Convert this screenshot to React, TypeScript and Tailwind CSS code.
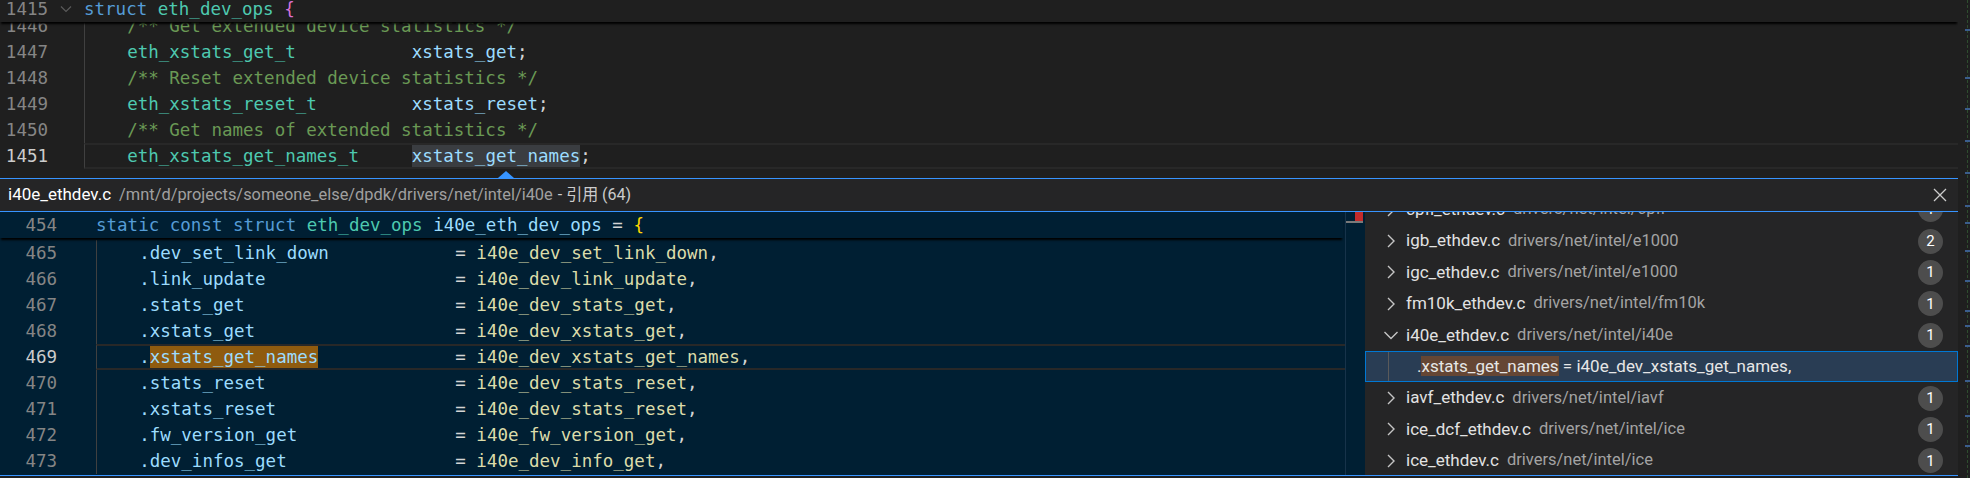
import React from 'react';

type Tok = [string, string];

const C = {
  kw: 'text-[#569cd6]',
  ty: 'text-[#4ec9b0]',
  id: 'text-[#9cdcfe]',
  fn: 'text-[#dcdcaa]',
  cm: 'text-[#6a9955]',
  pn: 'text-[#d4d4d4]',
};

const sp = (n: number) => ' '.repeat(Math.max(n, 1));

// struct member declaration, name aligned on column 31
const decl = (type: string, name: string, sel = false): Tok[] => [
  ['    ', ''],
  [type, C.ty],
  [sp(27 - type.length), ''],
  [name, sel ? `${C.id} inline-block bg-[#3a3d41]` : C.id],
  [';', C.pn],
];

// designated initializer, "=" aligned on column 34
const init = (field: string, fn: string, match = false): Tok[] => [
  ['    ', ''],
  ['.', C.id],
  [field, match ? `${C.id} inline-block bg-[#8f5b0f]` : C.id],
  [sp(29 - field.length), ''],
  ['= ', C.pn],
  [fn, C.fn],
  [',', C.pn],
];

const topLines: { n: number; toks: Tok[]; current?: boolean }[] = [
  { n: 1446, toks: [['    /** Get extended device statistics */', C.cm]] },
  { n: 1447, toks: decl('eth_xstats_get_t', 'xstats_get') },
  { n: 1448, toks: [['    /** Reset extended device statistics */', C.cm]] },
  { n: 1449, toks: decl('eth_xstats_reset_t', 'xstats_reset') },
  { n: 1450, toks: [['    /** Get names of extended statistics */', C.cm]] },
  { n: 1451, toks: decl('eth_xstats_get_names_t', 'xstats_get_names', true), current: true },
];

const peekLines: { n: number; toks: Tok[]; current?: boolean }[] = [
  { n: 465, toks: init('dev_set_link_down', 'i40e_dev_set_link_down') },
  { n: 466, toks: init('link_update', 'i40e_dev_link_update') },
  { n: 467, toks: init('stats_get', 'i40e_dev_stats_get') },
  { n: 468, toks: init('xstats_get', 'i40e_dev_xstats_get') },
  { n: 469, toks: init('xstats_get_names', 'i40e_dev_xstats_get_names', true), current: true },
  { n: 470, toks: init('stats_reset', 'i40e_dev_stats_reset') },
  { n: 471, toks: init('xstats_reset', 'i40e_dev_stats_reset') },
  { n: 472, toks: init('fw_version_get', 'i40e_fw_version_get') },
  { n: 473, toks: init('dev_infos_get', 'i40e_dev_info_get') },
];

const refs = [
  { file: 'cpfl_ethdev.c', dir: 'drivers/net/intel/cpfl', count: 1 },
  { file: 'igb_ethdev.c', dir: 'drivers/net/intel/e1000', count: 2 },
  { file: 'igc_ethdev.c', dir: 'drivers/net/intel/e1000', count: 1 },
  { file: 'fm10k_ethdev.c', dir: 'drivers/net/intel/fm10k', count: 1 },
  { file: 'i40e_ethdev.c', dir: 'drivers/net/intel/i40e', count: 1, open: true },
  { file: 'iavf_ethdev.c', dir: 'drivers/net/intel/iavf', count: 1 },
  { file: 'ice_dcf_ethdev.c', dir: 'drivers/net/intel/ice', count: 1 },
  { file: 'ice_ethdev.c', dir: 'drivers/net/intel/ice', count: 1 },
];

const Tokens = ({ toks }: { toks: Tok[] }) => (
  <>
    {toks.map(([t, c], i) => (
      <span key={i} className={c}>
        {t}
      </span>
    ))}
  </>
);

const CodeLine = ({
  n,
  toks,
  current,
  gutter,
  gap,
}: {
  n: number;
  toks: Tok[];
  current?: boolean;
  gutter: string;
  gap: string;
}) => (
  <div className="flex h-[26px]">
    <div className={`${gutter} text-right leading-[26px] ${current ? 'text-[#cccccc]' : 'text-[#858585]'}`}>{n}</div>
    <div className={gap} />
    <div
      className={`flex-1 whitespace-pre border-l border-[#404040] ${
        current ? 'border-y-2 border-y-[#282828] leading-[22px]' : 'leading-[26px]'
      }`}
    >
      <Tokens toks={toks} />
    </div>
  </div>
);

const Chevron = ({ open }: { open?: boolean }) => (
  <svg width="24" height="24" viewBox="0 0 24 24" fill="none" stroke="#c5c5c5" strokeWidth="1.4">
    {open ? <polyline points="5.5,9 12,15.5 18.5,9" /> : <polyline points="9,6 15,12 9,18" />}
  </svg>
);

const TopEditor = () => (
  <div className="relative h-[178px] shrink-0">
    <div className="pt-[13px]">
      {topLines.map((l) => (
        <CodeLine key={l.n} {...l} gutter="w-[48px]" gap="w-[36px]" />
      ))}
    </div>

    {/* sticky scroll */}
    <div className="absolute left-0 right-0 top-0 h-[22px] overflow-hidden bg-[#1f1f1f] shadow-[0_3px_2px_-1px_#000]">
      <div className="-mt-[4px] flex h-[26px] leading-[26px]">
        <span className="w-[48px] text-right text-[#858585]">1415</span>
        <span className="flex w-[36px] items-center justify-center">
          <svg width="12" height="8" viewBox="0 0 12 8" fill="none" stroke="#5a5a5a" strokeWidth="1.2">
            <polyline points="1,1.5 6,6.5 11,1.5" />
          </svg>
        </span>
        <span className="whitespace-pre">
          <span className={C.kw}>struct</span> <span className={C.ty}>eth_dev_ops</span>{' '}
          <span className="text-[#da70d6]">{'{'}</span>
        </span>
      </div>
    </div>

    {/* peek arrow */}
    <div className="absolute bottom-0 left-[498px] h-0 w-0 border-x-[8px] border-b-[7px] border-x-transparent border-b-[#3794ff]" />
  </div>
);

const PeekEditor = () => (
  <div className="relative w-[1365px] shrink-0 overflow-hidden bg-[#001f33]">
    <div className="relative z-10 mr-[22px] flex h-[26px] bg-[#001f33] leading-[26px] shadow-[0_3px_2px_-1px_#000]">
      <span className="w-[57px] text-right text-[#858585]">454</span>
      <span className="w-[39px]" />
      <span className="whitespace-pre">
        <span className={C.kw}>static const struct</span> <span className={C.ty}>eth_dev_ops</span>{' '}
        <span className={C.id}>i40e_eth_dev_ops</span> <span className={C.pn}>=</span>{' '}
        <span className="text-[#ffd700]">{'{'}</span>
      </span>
    </div>
    <div className="mt-[2px]">
      {peekLines.map((l) => (
        <CodeLine key={l.n} {...l} gutter="w-[57px]" gap="w-[39px]" />
      ))}
    </div>

    {/* overview ruler */}
    <div className="absolute bottom-0 right-0 top-0 w-[20px] border-l border-[#17334a] bg-[#001f33]">
      <div className="ml-auto mr-[2px] h-[9px] w-[8px] bg-[#c42b2b]" />
      <div className="h-[2px] w-[17px] bg-[#7a7a7a]" />
    </div>
  </div>
);

const RefTree = () => (
  <div className="flex-1 overflow-hidden bg-[#252526] font-['Roboto','Noto_Sans_CJK_SC',sans-serif]">
    <div className="-mt-[18px]">
      {refs.map((r) => (
        <React.Fragment key={r.file}>
          <div className="flex h-[31.4px] items-center pr-[15px]">
            <span className="ml-[14px] flex w-[27px] items-center">
              <Chevron open={r.open} />
            </span>
            <span className="text-[17px] text-[#e2e2e2]">{r.file}</span>
            <span className="ml-[8px] text-[16.5px] text-[#a3a3a3]">{r.dir}</span>
            <span className="ml-auto flex h-[25px] w-[25px] items-center justify-center rounded-full bg-[#4d4d4d] text-[15px] text-white">
              {r.count}
            </span>
          </div>
          {r.open && (
            <div className="flex h-[31.4px] items-center border border-[#0078d4] bg-[#293d54] text-[17px] text-[#e6e6e6]">
              <div className="ml-[22px] h-full w-px bg-[#5a5a5a]" />
              <span className="ml-[28px] whitespace-pre">
                .<span className="bg-[#654634]">xstats_get_names</span> = i40e_dev_xstats_get_names,
              </span>
            </div>
          )}
        </React.Fragment>
      ))}
    </div>
  </div>
);

const PeekWidget = () => (
  <div className="flex h-[298px] shrink-0 flex-col border-y border-[#3794ff]">
    <div className="flex h-[33px] shrink-0 items-center border-b border-[#3794ff] bg-[#252526] pl-[8px] pr-[10px] font-['Roboto','Noto_Sans_CJK_SC',sans-serif]">
      <span className="text-[17px] text-white">i40e_ethdev.c</span>
      <span className="ml-[8px] text-[16.4px] text-[#a0a0a0]">/mnt/d/projects/someone_else/dpdk/drivers/net/intel/i40e</span>
      <span className="ml-[5px] text-[16px] text-[#cccccc]">- 引用 (64)</span>
      <svg className="ml-auto" width="16" height="16" viewBox="0 0 16 16" fill="none" stroke="#cccccc" strokeWidth="1.3">
        <path d="M2 2 L14 14 M14 2 L2 14" />
      </svg>
    </div>
    <div className="flex min-h-0 flex-1">
      <PeekEditor />
      <RefTree />
    </div>
  </div>
);

const ticks = [29, 77, 108, 140, 172, 205, 222, 250, 280, 310, 325, 345, 380, 415, 445];

const OverviewRuler = () => (
  <div className="relative w-[12px] bg-[#1f1f1f]">
    <div className="ml-[9px] h-full w-px bg-[repeating-linear-gradient(#2e4d2e_0_3px,transparent_3px_5px)]" />
    {ticks.map((t) => (
      <div key={t} className="absolute right-0 h-[2px] w-[5px] bg-[#3b5d8c]" style={{ top: t }} />
    ))}
  </div>
);

export default function App() {
  return (
    <div className="flex h-[478px] w-[1970px] overflow-hidden bg-[#1f1f1f] font-['DejaVu_Sans_Mono',monospace] text-[17.5px]">
      <div className="flex w-[1958px] flex-col">
        <TopEditor />
        <PeekWidget />
      </div>
      <OverviewRuler />
    </div>
  );
}
